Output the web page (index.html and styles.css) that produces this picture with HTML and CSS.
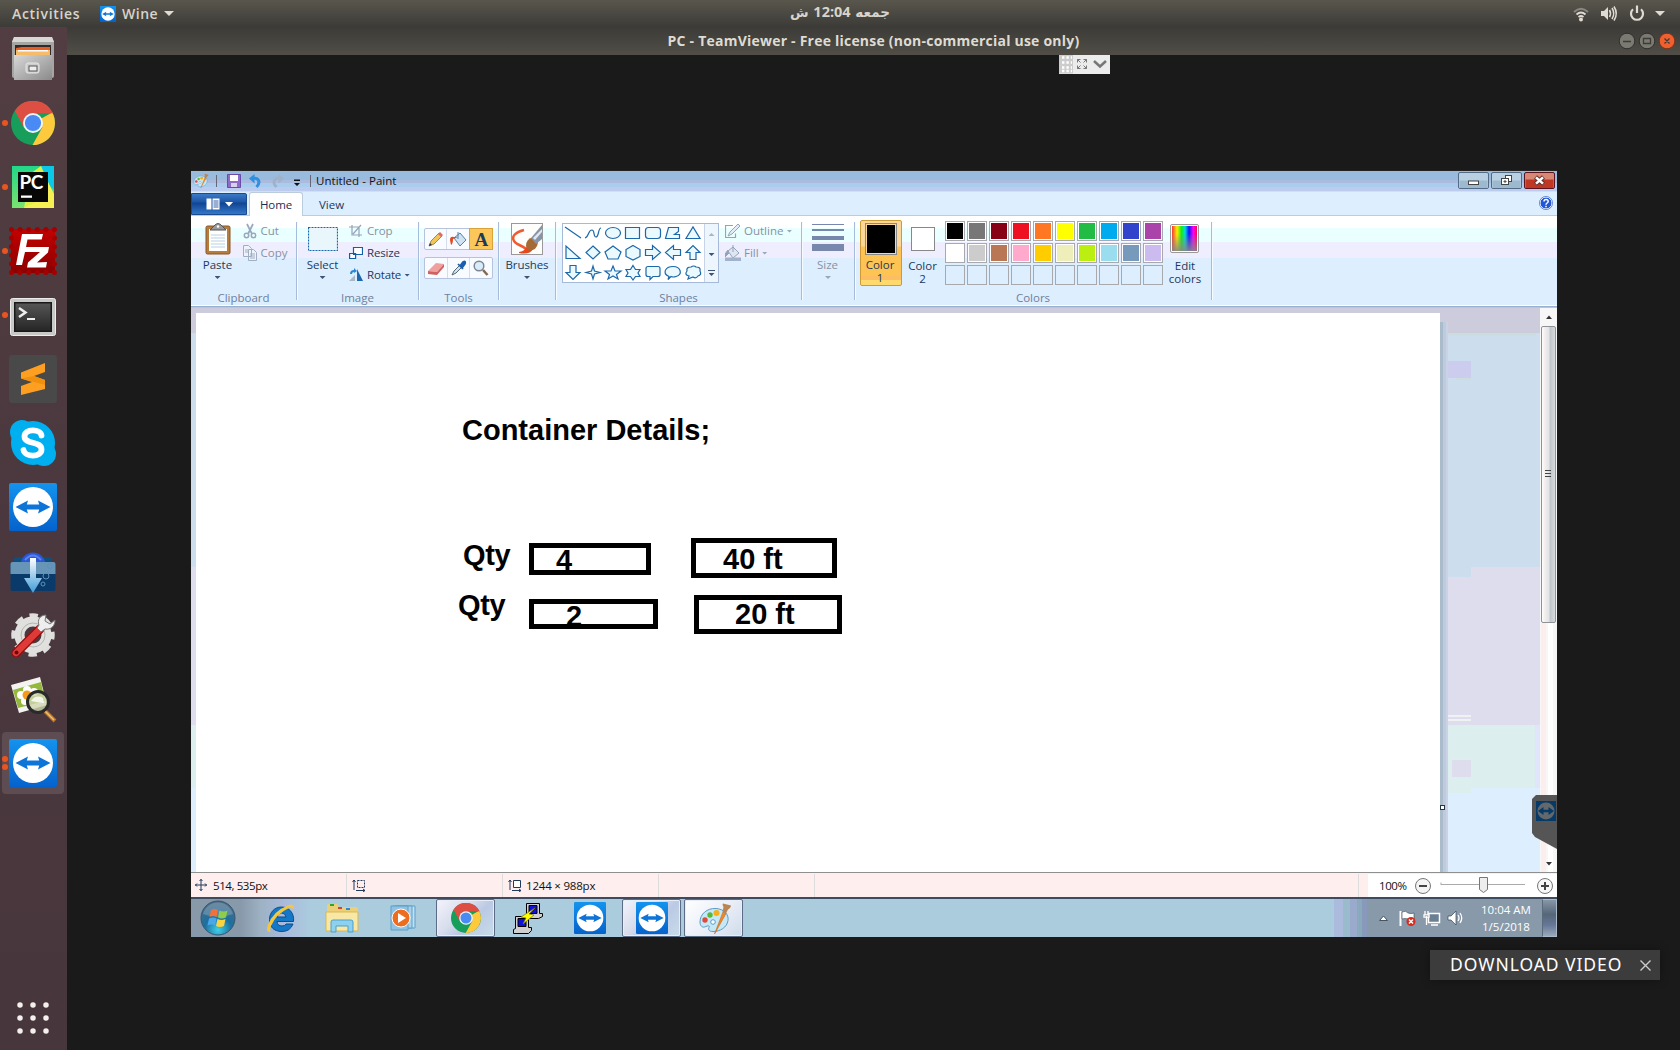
FILE: index.html
```html
<!DOCTYPE html>
<html lang="en">
<head>
<meta charset="utf-8">
<title>PC - TeamViewer</title>
<link rel="stylesheet" href="styles.css">
</head>
<body>
<svg class="defs" width="0" height="0">
  <defs>
    <linearGradient id="gTv" x1="0" y1="0" x2="0" y2="1"><stop offset="0" stop-color="#1493ee"/><stop offset="1" stop-color="#0562cc"/></linearGradient>
    <linearGradient id="gGrey" x1="0" y1="0" x2="1" y2="1"><stop offset="0" stop-color="#d8d8d8"/><stop offset="1" stop-color="#8a8a8a"/></linearGradient>
    <linearGradient id="gFz" x1="0" y1="0" x2="0" y2="1"><stop offset="0" stop-color="#c40000"/><stop offset="1" stop-color="#8c0000"/></linearGradient>
    <linearGradient id="gPcm" x1="0" y1="0" x2="0" y2="1"><stop offset="0" stop-color="#21d789"/><stop offset="1" stop-color="#7be36f"/></linearGradient>
    <linearGradient id="gTerm" x1="0" y1="0" x2="0" y2="1"><stop offset="0" stop-color="#555"/><stop offset="1" stop-color="#262626"/></linearGradient>
    <linearGradient id="gArrow" x1="0" y1="0" x2="0" y2="1"><stop offset="0" stop-color="#fff"/><stop offset="1" stop-color="#3f9bd8"/></linearGradient>
    <radialGradient id="gOrb" cx=".5" cy=".85" r=".8"><stop offset="0" stop-color="#3fd0e8"/><stop offset=".5" stop-color="#1c6f9f"/><stop offset="1" stop-color="#4a6c88"/></radialGradient>
    <linearGradient id="gRain" x1="0" x2="1" y1="0" y2="0"><stop offset="0" stop-color="#f33"/><stop offset=".2" stop-color="#fe0"/><stop offset=".38" stop-color="#1e1"/><stop offset=".52" stop-color="#0dd"/><stop offset=".68" stop-color="#11f"/><stop offset=".85" stop-color="#f0f"/><stop offset="1" stop-color="#f04"/></linearGradient>
    <linearGradient id="gFade" x1="0" x2="0" y1="0" y2="1"><stop offset=".3" stop-color="#888" stop-opacity="0"/><stop offset="1" stop-color="#888" stop-opacity=".9"/></linearGradient>
    <symbol id="tv" viewBox="0 0 48 48"><rect width="48" height="48" rx="2" fill="url(#gTv)"/><circle cx="24" cy="24" r="20" fill="#fff"/><path d="M6.500 24L19 17.500l-1.200 4h12.400l-1.200-4L41.500 24 29 30.500l1.200-4H17.800l1.200 4z" fill="#0e74d8"/></symbol>
    <symbol id="chrome" viewBox="0 0 44 44"><circle cx="22" cy="22" r="22" fill="#179e5a"/><path d="M22 22L41.300 11.500A22 22 0 0 1 21.500 44L31.500 26z" fill="#fdca3e"/><path d="M3.800 9.700A22 22 0 0 1 42 12.200H22L12.500 26z" fill="#dd4f43"/><circle cx="22" cy="22" r="10" fill="#f4f4f4"/><circle cx="22" cy="22" r="8.100" fill="#4a8af4"/></symbol>
    <symbol id="palette" viewBox="0 0 32 32"><path d="M2 20c0-8 7-14 16-13.500 8 .5 13 6 12 12-1 7-8 11-15 11-4 0-5-2-4-4s-1-2-3-1c-4 2-6-1-6-4.500z" fill="#c5e8f6" stroke="#5b9bc4"/><circle cx="7" cy="18" r="2.700" fill="#e04a3c"/><circle cx="12" cy="13" r="2.700" fill="#59b838"/><circle cx="18.500" cy="11" r="3" fill="#f6ae1c"/><circle cx="15" cy="20" r="2.300" fill="#fff" stroke="#5b9bc4"/><path d="M16.500 32L25 10l3 1.500z" fill="#ef8a2c" stroke="#c76516" stroke-width=".6"/><path d="M24.500 10l1-5c-1-1-1-3-.500-3.500l8 2c0 2-2 3.500-3 4l-2 4z" fill="#b98653"/></symbol>
  </defs>
</svg>

<header class="topbar">
  <span class="activities">Activities</span>
  <svg class="tv16" width="16" height="16"><use href="#tv"/></svg>
  <span class="appname">Wine</span>
  <i class="caret"></i>
  <span class="clock" dir="rtl">جمعه <b>12:04</b> ش</span>
  <svg class="indicators" width="94" height="18" viewBox="0 0 94 18" fill="none">
    <path d="M1 7Q8 .5 15 7" stroke="#8a8882" stroke-width="2"/><path d="M3.500 9.500Q8 5.500 12.500 9.500M5.500 12Q8 10 10.500 12" stroke="#dfdbd2" stroke-width="1.800"/><circle cx="8" cy="14.500" r="2" fill="#dfdbd2"/>
    <path d="M28 6h3l4-4v13l-4-4h-3z" fill="#dfdbd2"/><path d="M36.500 5q2 3.500 0 7M39 3q3.500 5.500 0 11M41 1.500q4.500 7 0 14" stroke="#dfdbd2" stroke-width="1.600"/>
    <path d="M60 4.300a6 6 0 1 0 8 0M64 .5v7.500" stroke="#dfdbd2" stroke-width="2.200"/>
    <path d="M82 6h10l-5 5z" fill="#dfdbd2"/>
  </svg>
</header>

<div class="desktop">
<nav class="dock">
  <div class="app"><svg width="48" height="48" viewBox="0 0 48 48"><path d="M5 2h38l2 5v34q0 2-2 2H5q-2 0-2-2V7z" fill="#a5a5a3"/><path d="M5 2h38l2 5H3z" fill="#d7d7d5"/><path d="M6 10h36v12H6z" fill="#302b28"/><path d="M7 13l6-1h28v9H7z" fill="#e85e22"/><path d="M7 15h34v7H7z" fill="#f6bb6b"/><path d="M9 15h30v1.500H9z" fill="#fff"/><path d="M5 20h38v25H5z" fill="url(#gGrey)"/><rect x="17" y="28" width="13" height="10" rx="2" fill="#ccc" stroke="#e6e6e6"/><rect x="20" y="31" width="8" height="5" fill="#eee" stroke="#555"/></svg></div>
  <div class="app"><i class="dot"></i><svg width="44" height="44"><use href="#chrome"/></svg></div>
  <div class="app"><i class="dot"></i><svg width="42" height="42" viewBox="0 0 42 42"><path d="M0 0h42v42H0z" fill="url(#gPcm)"/><path d="M30 0h12v24L28 10z" fill="#0bc7e8"/><path d="M18 8L29 0l13 30v12H12z" fill="#dff045"/><path d="M34 12l8 16v14H12l24-12z" fill="#f7f055"/><rect x="6" y="6" width="30" height="30" fill="#070707"/><path d="M9 29.500h11v2.300H9z" fill="#fff"/><text x="7.500" y="23" class="pc">PC</text></svg></div>
  <div class="app"><i class="dot"></i><svg width="48" height="48" viewBox="0 0 48 48"><rect x="2" y="2" width="44" height="44" fill="url(#gFz)"/><rect x="2.500" y="2.500" width="43" height="43" fill="none" stroke="#a50000" stroke-width="5" stroke-linecap="round" stroke-dasharray="0.1 8.500"/><path d="M13 7h21l-1.300 5.500H18.500L17 20h14l-1 5H16l-3 13H7z" fill="#fff"/><path d="M23 20h17l-1 5.500-11 10 10-.5-1 5.500H18l1-5L31 25h-9z" fill="#fff"/></svg></div>
  <div class="app term"><i class="dot"></i><svg width="46" height="40" viewBox="0 0 46 40"><rect x=".5" y="1.500" width="45" height="37" rx="2" fill="#c8c8c6" stroke="#ececec"/><rect x="4" y="5" width="38" height="30" fill="#191919"/><rect x="5.500" y="6.500" width="35" height="27" fill="url(#gTerm)"/><path d="M9 11l6.500 4.500L9 20" fill="none" stroke="#eee" stroke-width="2.500"/><path d="M17 21h8v2h-8z" fill="#eee"/></svg></div>
  <div class="app"><svg width="48" height="48" viewBox="0 0 48 48"><rect width="48" height="48" rx="3" fill="#494949"/><path d="M12 17.500L36 8v9l-11 4 11 4v9L12 40v-9l11-4-11-3.500z" fill="#ff9f22"/><path d="M12 23.500l13-2.500 11 4v5z" fill="#f0900f"/></svg></div>
  <div class="app"><svg width="48" height="48" viewBox="0 0 48 48"><circle cx="13" cy="13" r="12" fill="#00aff0"/><circle cx="35" cy="35" r="12" fill="#00aff0"/><circle cx="24" cy="24" r="22" fill="#00aff0"/><path d="M32.500 16.500C31.500 9.500 15.500 9.500 15.500 17.500 15.500 26 32.500 21.500 32.500 30.500 32.500 38.500 16 38.500 14.500 31" fill="none" stroke="#fff" stroke-width="5.800" stroke-linecap="round"/></svg></div>
  <div class="app"><svg width="48" height="48"><use href="#tv"/></svg></div>
  <div class="app"><svg width="48" height="48" viewBox="0 0 48 48"><rect x="5" y="10" width="38" height="12" rx="2" fill="#104f7b"/><circle cx="24" cy="18" r="12.500" fill="#2c57d6"/><path d="M16 13q8-9 16 0" stroke="#5b83ef" stroke-width="2" fill="none"/><rect x="1.500" y="15" width="45" height="29" rx="2" fill="#0a3a6a"/><path d="M1.500 27V17q0-2 2-2h41q2 0 2 2v10z" fill="#6795b8"/><g fill="none" stroke="#5c91bd"><circle cx="37" cy="29" r="3"/><circle cx="41" cy="19" r="2.500"/><circle cx="34" cy="37" r="2"/></g><path d="M21 11h6v20h6L24 46l-9-15h6z" fill="url(#gArrow)"/></svg></div>
  <div class="app"><svg width="48" height="48" viewBox="0 0 48 48"><circle cx="24" cy="24" r="19" fill="none" stroke="#dededc" stroke-width="5.500" stroke-dasharray="8.200 6.720" stroke-dashoffset="4"/><circle cx="24" cy="24" r="13.500" fill="none" stroke="#e0e0de" stroke-width="10"/><circle cx="24" cy="24" r="12" fill="none" stroke="#b4b4b2"/><path d="M7 42L31 18" stroke="#8e0f12" stroke-width="9" stroke-linecap="round"/><path d="M7 42L31 18" stroke="#de3b38" stroke-width="6.500" stroke-linecap="round"/><path d="M28 17l4 4 4-3c6 1 10-3 10-9l-5 4-5-3 1-6c-6 0-9 5-7 10z" fill="#eee" stroke="#777"/><circle cx="7.500" cy="41.500" r="2" fill="#68090b"/></svg></div>
  <div class="app"><svg width="48" height="48" viewBox="0 0 48 48"><path d="M2 10L31 2l7 28L10 38z" fill="#f3f3ef"/><path d="M4 15l28-8 4 19-27 7z" fill="#94b83b"/><g fill="#fff"><circle cx="18" cy="15" r="4"/><circle cx="12" cy="20" r="4"/><circle cx="25" cy="17" r="4"/><circle cx="16" cy="26" r="4"/></g><circle cx="18" cy="20" r="4.500" fill="#f39a1d"/><path d="M36 36l10 10" stroke="#b9772d" stroke-width="4"/><path d="M36 36l9 9" stroke="#eec07b" stroke-width="1.500"/><circle cx="29" cy="27" r="10.500" fill="#cfd6b0" fill-opacity=".8" stroke="#292b2a" stroke-width="3"/><path d="M22 26q5-7 12-3l1 5-8-1z" fill="#fff" fill-opacity=".8"/></svg></div>
  <div class="app active"><i class="dot two"></i><svg width="48" height="48"><use href="#tv"/></svg></div>
  <svg class="appgrid" width="32" height="32" viewBox="0 0 32 32"><path d="M3 3h.01M16 3h.01M29 3h.01M3 16h.01M16 16h.01M29 16h.01M3 29h.01M16 29h.01M29 29h.01" stroke="#f3f0ee" stroke-width="5.500" stroke-linecap="round"/></svg>
</nav>

<main class="viewer">
  <div class="titlebar"><span>PC - TeamViewer - Free license (non-commercial use only)</span>
    <svg class="wbtns" width="60" height="20" viewBox="0 0 60 20"><g stroke="#31302c"><circle cx="10" cy="10" r="7.800" fill="#7b7a72"/><circle cx="30" cy="10" r="7.800" fill="#7b7a72"/><circle cx="50" cy="10" r="7.800" fill="#f0602f" stroke="#7a3319"/></g><path d="M6 10.500h8M26.500 7.500h7v5h-7zM47.500 7.500l5 5m0-5l-5 5" stroke="#3c3b37" stroke-width="1.300" fill="none"/></svg>
  </div>
  <svg class="tvtool" width="51" height="19" viewBox="0 0 51 19"><path d="M0 0h51v19H0z" fill="#ececec"/><path d="M0 0h14v18.500H0z" fill="#ccc"/><path d="M3 2.500h10M3 7.500h10M3 12.500h10M3 16h10" stroke="#fff" stroke-width="2.400" stroke-dasharray="2.400 2"/><path d="M18.500 7.500v-3h3M24.500 4.500h3v3M27.500 10.500v3h-3M21.500 13.500h-3v-3M18.500 4.500l3 3M27.500 4.500l-3 3M27.500 13.500l-3-3M18.500 13.500l3-3" stroke="#777" fill="none"/><path d="M35 6l6 5.500L47 6" stroke="#777" stroke-width="2.500" fill="none"/></svg>

  <section class="remote">
    <div class="ptitle">
      <svg class="qat" width="94" height="20" viewBox="0 0 94 20"><svg x="1" y="2" width="17" height="15"><use href="#palette"/></svg>
        <path d="M25.500 4v12" stroke="#667"/>
        <path d="M36.500 3.500h13v13h-13z" fill="#8d6bc8" stroke="#6a4ba8"/><path d="M39 4h8v6h-8z" fill="#fff"/><path d="M40 12h6v4h-6z" fill="#d9d0ee"/>
        <path d="M61 7.500c7-1.500 9 4 4.500 8.500" fill="none" stroke="#2f8fe0" stroke-width="3"/><path d="M63.500 3v9.500L58 7.500z" fill="#2f8fe0"/>
        <path d="M90 7.500c-7-1.500-9 4-4.500 8.500" fill="none" stroke="#a0b2c8" stroke-width="3"/><path d="M87.500 3v9.500L93 7.500z" fill="#a0b2c8"/></svg>
      <svg class="qmore" width="8" height="8" viewBox="0 0 8 8"><path d="M1 .5h6v1.500H1zM1 4h6L4 7z" fill="#111"/></svg>
      <span class="vbar"></span>
      <span class="ptext">Untitled - Paint</span>
      <svg class="caption" width="98" height="17" viewBox="0 0 98 17">
        <g stroke="#536b85"><rect x=".5" y=".5" width="30" height="16" rx="1.500" fill="#b9d0e2"/><rect x="33.500" y=".5" width="30" height="16" rx="1.500" fill="#b9d0e2"/><rect x="66.500" y=".5" width="30" height="16" rx="1.500" fill="#d88875" stroke="#5a1520"/></g>
        <path d="M1.500 8.500h28V16h-28zM34.500 8.500h28V16h-28z" fill="#9db9cf"/><path d="M67.500 7.500h28V16h-28z" fill="#c03823"/>
        <rect x="10.500" y="9" width="10" height="3.500" fill="#fff" stroke="#444"/>
        <g fill="#fff" stroke="#444"><rect x="47.500" y="3.500" width="6" height="6"/><rect x="43.500" y="6.500" width="7" height="6"/><path d="M46 9h2v1h-2z"/></g>
        <path d="M77.500 5l8 7m0-7l-8 7" stroke="#633" stroke-width="4.500"/><path d="M78 5.300l7 6.400m0-6.400l-7 6.400" stroke="#fff" stroke-width="2.500"/>
      </svg>
    </div>
    <div class="ptabs">
      <div class="filebtn"><svg width="28" height="12" viewBox="0 0 28 12"><rect x=".5" y=".5" width="13" height="11" fill="#fff"/><path d="M6 0v12" stroke="#1d4f9c"/><path d="M7.500 3h5M7.500 5h5M7.500 7h5M7.500 9h5" stroke="#1d4f9c" stroke-width=".9"/><path d="M19 4h8l-4 4.500z" fill="#fff"/></svg></div>
      <div class="tab home">Home</div><div class="tab viewtab">View</div>
      <svg class="help" width="14" height="14" viewBox="0 0 14 14"><circle cx="7" cy="7" r="6" fill="#2156d8" stroke="#fff"/><circle cx="7" cy="7" r="6.600" fill="none" stroke="#3a66c8" stroke-width=".7"/><path d="M5 5.500c0-3 4.200-2.500 4.200 0C9.200 7 7 7 7 8.700M7 9.800v1.500" stroke="#fff" stroke-width="1.500" fill="none"/></svg>
    </div>

    <div class="ribbon">
      <div class="group g1"><div class="body">
        <div class="big paste"><svg width="26" height="32" viewBox="0 0 26 32"><rect x="1" y="3" width="24" height="28" rx="1.500" fill="#b67c3c" stroke="#85562a"/><path d="M4 6h18v22H4z" fill="#fff"/><path d="M6 12h14M6 15h14M6 18h14M6 21h14M6 24h14" stroke="#b8cfe4"/><path d="M5 7l4-4q4-5 8 0l4 4z" fill="#9a9a9a" stroke="#555"/><circle cx="13" cy="3.500" r="1.200" fill="#fff"/></svg><span>Paste</span><i class="dn"></i></div>
        <div class="rows dis"><div class="r"><svg width="14" height="16" viewBox="0 0 14 16" fill="none" stroke="#9aa8bd"><path d="M4 1l5 10M10 1L5 11" stroke-width="1.700"/><circle cx="3.500" cy="12.500" r="2.200" stroke-width="1.500"/><circle cx="10.500" cy="12.500" r="2.200" stroke-width="1.500"/></svg><span>Cut</span></div>
        <div class="r"><svg width="14" height="16" viewBox="0 0 14 16" fill="#eef2fa" stroke="#a0aec4"><path d="M.5.500h5l3 3v8h-8zM5.500 4.500h5l3 3v8h-8z"/><path d="M7 9h5M7 11h5M7 13h5M2 5h3M2 7h3"/></svg><span>Copy</span></div></div>
      </div><div class="gl">Clipboard</div></div>

      <div class="group g2"><div class="body">
        <div class="big select"><svg width="30" height="32" viewBox="0 0 30 32"><rect x=".5" y="4.500" width="29" height="23" fill="#e9f7fd" stroke="#1767ae" stroke-width="1.200" stroke-dasharray="2 1"/></svg><span>Select</span><i class="dn"></i></div>
        <div class="rows"><div class="r dis"><svg width="14" height="14" viewBox="0 0 14 14" fill="none" stroke="#94a3ba"><path d="M3 1v10h10M0 3h10v10M4 10l8-9" stroke-width="1.200"/></svg><span>Crop</span></div>
        <div class="r"><svg width="14" height="14" viewBox="0 0 14 14" fill="#fff" stroke="#1460a8" stroke-width="1.200"><path d="M4.500 1.500h9v7h-9zM.6 7.500h6v5h-6z"/></svg><span>Resize</span></div>
        <div class="r"><svg width="14" height="14" viewBox="0 0 14 14"><path d="M8 1v12h6z" fill="#1c67b0"/><path d="M6 7v6H0z" fill="#a9b8c8"/><path d="M1 6q0-4 4-4V0l3 3-3 2V4q-2 0-2 2z" fill="#2b86d9"/></svg><span>Rotate</span><i class="dn"></i></div></div>
      </div><div class="gl">Image</div></div>

      <div class="group g3"><div class="body toolsbody">
        <div class="trow"><div><svg width="16" height="16" viewBox="0 0 16 16"><path d="M1 15l2-5 8-8 3 3-8 8z" fill="#f1c559" stroke="#856023" stroke-width=".7"/><path d="M10 3l2-2 3 3-2 2z" fill="#d86a6a"/><path d="M1 15l1-3 2 2z" fill="#333"/></svg></div><div><svg width="18" height="16" viewBox="0 0 18 16"><path d="M5 7l6-5 6 7-6 6z" fill="#cfe3f3" stroke="#5580a8"/><path d="M5 6Q1 5 1 9l1 5q2-1 2-6l5-2z" fill="#e34a20"/><path d="M9 8V1" stroke="#5580a8"/></svg></div><div class="on">A</div></div>
        <div class="trow"><div><svg width="18" height="14" viewBox="0 0 18 14"><path d="M1 10l8-8 8 1-7 8z" fill="#f0a09f"/><path d="M1 10l9 1v3l-9-1zM10 11l7-8v3l-7 8z" fill="#cf615e"/></svg></div><div><svg width="16" height="16" viewBox="0 0 16 16"><path d="M1 15l2-4 6-6 2 2-6 6z" fill="#cfe3f3" stroke="#567"/><path d="M7 4l5 5M9 6l3-4q3-2 2 2l-3 4z" fill="#1c5fae" stroke="#1c5fae" stroke-width="1.700"/></svg></div><div><svg width="16" height="16" viewBox="0 0 16 16"><circle cx="6" cy="6" r="4.800" fill="#d9ecf8" stroke="#7b8794" stroke-width="1.500"/><path d="M10 10l4.500 5" stroke="#85684c" stroke-width="2.500"/></svg></div></div>
      </div><div class="gl">Tools</div></div>

      <div class="group g4"><div class="body"><div class="big brushes"><svg width="32" height="32" viewBox="0 0 32 32"><rect x=".5" y=".5" width="31" height="31" fill="#fdfdfb" stroke="#999"/><path d="M13 7Q-1 11 3 18c2 4 8 4 12 8" fill="none" stroke="#ef5a30" stroke-width="2.500"/><path d="M8 29q7-1 8-7l6 4q-3 6-14 4z" fill="#e34a20"/><path d="M15 23q0-7 6.500-8.500l5.500 5q-1 8-9 8z" fill="#a66a34"/><path d="M20 15L31 2v14l-6 5z" fill="#8694a8"/><path d="M22 15l9-9v3l-7 8z" fill="#dfe6ee"/></svg><span>Brushes</span><i class="dn"></i></div></div></div>

      <div class="group g5"><div class="body">
        <div class="gallery"><svg width="142" height="58" viewBox="0 0 142 58" fill="#e9f9fe" stroke="#1c68aa" stroke-width="1.200">
          <path d="M2 3l16 11"/><path d="M22 14c4-1 3-8 7-8 3 0 1 7 4 7s2-9 5-9" fill="none"/><ellipse cx="50" cy="9" rx="7.500" ry="5.500"/><path d="M62.500 3.500h14v11h-14z"/><rect x="82.500" y="3.500" width="15" height="11" rx="3"/><path d="M102.500 14.500l3-11h10v4l-4 3h5v4z"/><path d="M123 14.500h14L130 3z"/>
          <path d="M3 34.500V22l14 12.500z"/><path d="M30 22l7 6.500-7 6.500-7-6.500z"/><path d="M50 22l8 6-3 7H45l-3-7z"/><path d="M70 21.500l7 4v7l-7 3.500-7-3.500v-7z"/><path d="M82.500 25.500h7v-4l8 7-8 7v-4h-7z"/><path d="M117.500 25.500h-7v-4l-8 7 8 7v-4h7z"/><path d="M127 35.500v-7h-4l7-7 7 7h-4v7z"/>
          <path d="M7 41.500v7H3l7 7 7-7h-4v-7z"/><path d="M30 42l1.500 5 5.500 1.500-5.500 1.500L30 55l-1.500-5-5.500-1.500 5.500-1.500z"/><path d="M50 42l2 5h6l-4.500 3.500L55 55l-5-3-5 3 1.500-4.500L42 47h6z"/><path d="M70 41.500l2.500 4H77l-2 3.500 2 3.500h-4.500L70 56l-2.500-3.500H63l2-3.500-2-3.500h4.500z"/><path d="M85 42.500h10q2 0 2 2v6q0 2-2 2h-5l-3 3v-3h-2q-2 0-2-2v-6q0-2 2-2z"/><path d="M106 52.500c-7-3-4-10 4-10s10 8 3 10q-3 1-5 0l-3 3z"/><path d="M126 52q-5-1-2-5-1-4 4-4 3-2 5 0 5 0 4 4 2 4-2 5-2 3-5 1l-5 2z"/></svg>
          <div class="gscroll"><i class="up"></i><i class="dn"></i><i class="bar"></i><i class="dn"></i></div></div>
        <div class="rows dis"><div class="r"><svg width="16" height="14" viewBox="0 0 16 14" fill="none" stroke="#94a3ba"><path d="M8 1.500H.5v12h10v-4" stroke-width="1.200"/><path d="M3 12l2-4 8-8 2 2-8 8z" fill="#e6ecf7"/></svg><span>Outline</span><i class="dn"></i></div>
        <div class="r"><svg width="16" height="16" viewBox="0 0 16 16"><path d="M3 6l5-4 6 6-6 5z" fill="#dfe6f2" stroke="#94a3ba"/><path d="M3 5L0 9v3l4-4M8 7V0" stroke="#94a3ba" fill="#94a3ba"/><path d="M0 12.500h16V16H0z" fill="#a3b2cb"/></svg><span>Fill</span><i class="dn"></i></div></div>
      </div><div class="gl">Shapes</div></div>

      <div class="group g6"><div class="body"><div class="big size dis"><svg width="32" height="32" viewBox="0 0 32 32"><path d="M0 1h32v1H0zM0 6h32v2H0zM0 13h32v4H0zM0 21h32v7H0z" fill="#7888ac"/></svg><span>Size</span><i class="dn"></i></div></div></div>

      <div class="group g7"><div class="body">
        <div class="cbtn sel"><i class="sw1"></i><span>Color<br>1</span></div>
        <div class="cbtn second"><i class="sw2"></i><span>Color<br>2</span></div>
        <div class="pal">
          <i class="k0"></i><i class="k1"></i><i class="k2"></i><i class="k3"></i><i class="k4"></i><i class="k5"></i><i class="k6"></i><i class="k7"></i><i class="k8"></i><i class="k9"></i>
          <i class="m0"></i><i class="m1"></i><i class="m2"></i><i class="m3"></i><i class="m4"></i><i class="m5"></i><i class="m6"></i><i class="m7"></i><i class="m8"></i><i class="m9"></i>
          <i class="e"></i><i class="e"></i><i class="e"></i><i class="e"></i><i class="e"></i><i class="e"></i><i class="e"></i><i class="e"></i><i class="e"></i><i class="e"></i>
        </div>
        <div class="cbtn edit"><svg width="30" height="30" viewBox="0 0 30 30"><rect x=".5" y=".5" width="28" height="28" rx="1.500" fill="#fff" stroke="#999"/><path d="M2 2h25v25H2z" fill="url(#gRain)"/><path d="M2 2h25v25H2z" fill="url(#gFade)"/></svg><span>Edit<br>colors</span></div>
      </div><div class="gl">Colors</div></div>
    </div>

    <div class="work">
      <div class="leftstrip"></div>
      <div class="canvas">
        <span class="t" style="left:266px;top:99px">Container Details;</span>
        <span class="t q" style="left:267px;top:224px">Qty</span><span class="t q" style="left:262px;top:274px">Qty</span>
        <div class="box" style="left:333px;top:230px;width:122px;height:32px"></div>
        <div class="box" style="left:495px;top:225px;width:146px;height:40px"></div>
        <div class="box" style="left:333px;top:286px;width:129px;height:30px"></div>
        <div class="box" style="left:498px;top:282px;width:148px;height:39px"></div>
        <span class="t" style="left:360px;top:229px">4</span><span class="t" style="left:527px;top:228px">40 ft</span>
        <span class="t" style="left:370px;top:285px">2</span><span class="t" style="left:539px;top:283px">20 ft</span>
      </div>
      <svg class="gutter" width="100" height="564" viewBox="0 0 100 564"><path d="M0 0h100v564H0z" fill="#ccdded"/><path d="M0 0h100v25H0z" fill="#ccccdd"/><path d="M8 25h88v3H8z" fill="#ccdddd"/><path d="M8 53h23v17H8z" fill="#ccccee"/><path d="M16 70h15v2H16z" fill="#ccdddd"/><path d="M8 269h23v-10h69v158H8z" fill="#dddded"/><path d="M8 407h23v2H8zM8 411h23v2H8z" fill="#eef2f2"/><path d="M8 417h92v147H8z" fill="#ddeeff"/><path d="M8 417h88v63H31v5H8z" fill="#ddeeee"/><path d="M12 452h19v17H12z" fill="#ddddee"/><path d="M95 417h5v63h-5z" fill="#e1e5fb"/><path d="M0 14h3v550H0z" fill="#aabbcc"/><path d="M3 14h3v550H3z" fill="#bccbdd"/><path d="M6 14h2v550H6z" fill="#cbd2e6"/><rect x=".5" y="497.500" width="4" height="4" fill="#fff" stroke="#234"/></svg>
      <svg class="scroll" width="17" height="564" viewBox="0 0 17 564"><defs><linearGradient id="gThumb" x1="0" x2="1"><stop offset="0" stop-color="#fff"/><stop offset=".25" stop-color="#f3eeee"/><stop offset=".55" stop-color="#dfe3e4"/><stop offset=".6" stop-color="#bcc5cb"/><stop offset="1" stop-color="#dcdcdc"/></linearGradient></defs><path d="M0 0h17v564H0z" fill="#f7f7f8"/><path d="M1 315h5v249H1z" fill="#fdeeee"/><path d="M8 315h5v249H8z" fill="#fff"/><path d="M6 11l3-3.500 3 3.500z" fill="#333"/><rect x="1.500" y="18.500" width="14" height="296" rx="1.500" fill="url(#gThumb)" stroke="#8e9297"/><path d="M5 162.500h6M5 165.500h6M5 168.500h6" stroke="#444" stroke-width="1.200"/><path d="M6 554l3 3.500 3-3.500z" fill="#333"/></svg>
      <svg class="sidetab" width="25" height="54" viewBox="0 0 25 54"><path d="M25 0H4L0 4v34l3 4 22 12z" fill="#555"/><path d="M4 6h20v20H4z" fill="#063a68"/><circle cx="14" cy="16" r="8.500" fill="#64686b"/><path d="M6 16l5.500-4v2.700h5V12l5.500 4-5.500 4v-2.700h-5V20z" fill="#063a68"/></svg>
    </div>

    <div class="status">
      <div class="s1"><svg width="12" height="12" viewBox="0 0 12 12"><path d="M6 0v12M0 6h12M4.500 2L6 .5 7.500 2M4.500 10L6 11.500 7.500 10M2 4.500L.5 6 2 7.500M10 4.500L11.500 6 10 7.500" stroke="#1f3a5c" fill="none"/></svg><span>514, 535px</span></div>
      <div class="s2"><svg width="14" height="13" viewBox="0 0 14 13" fill="none" stroke="#1f3a5c"><path d="M2 11V1M.5 3L2 1l1.500 2M4 11.500h9M11 10l2 1.500-2 1.500"/><path d="M5.500 1.500h7v7h-7z" stroke-dasharray="2 1"/></svg></div>
      <div class="s3"><svg width="14" height="13" viewBox="0 0 14 13" fill="none" stroke="#1f3a5c"><path d="M2 11V1M.5 3L2 1l1.500 2M4 11.500h9M11 10l2 1.500-2 1.500"/><path d="M5.500 1.500h7v7h-7z" fill="#fff"/></svg><span class="dims">1244 × 988px</span></div>
      <div class="s4"></div><div class="s5"></div>
      <div class="zoombar"><span>100%</span><svg width="142" height="24" viewBox="0 0 142 24" fill="none"><circle cx="11" cy="13" r="7.500" stroke="#777" fill="#f4f4f4"/><path d="M7 13h8" stroke="#444" stroke-width="2"/><path d="M29 9.500V12M29 11.500h84" stroke="#aaa"/><path d="M67.500 4.500h8v12l-4 3-4-3z" fill="#eee" stroke="#777"/><circle cx="133" cy="13" r="7.500" stroke="#777" fill="#f8f8f8"/><path d="M133 9v8M129 13h8" stroke="#444" stroke-width="2"/></svg></div>
    </div>

    <div class="taskbar">
      <div class="ti orb"><svg width="36" height="36" viewBox="0 0 36 36"><circle cx="18" cy="18" r="17" fill="url(#gOrb)" stroke="#36566f"/><path d="M3 14a15.500 15.500 0 0 1 30 0q-15 6-30 0z" fill="#fff" opacity=".2"/><path d="M11 10q4-2 7 0l-1.500 7q-3-2-7 0z" fill="#f2713a"/><path d="M19.500 10.500q4 2 8 0L26 17.500q-4 2-8 0z" fill="#8fce4a"/><path d="M9 18.500q4-2 7.500 0L15 25.500q-3.500-2-7.500 0z" fill="#4ba7e8"/><path d="M17.500 19q4 2 8 0L24 26q-4 2-8 0z" fill="#fbd33e"/></svg></div>
      <div class="ti ie"><svg width="34" height="34" viewBox="0 0 34 34"><path d="M30 23q-3 7.500-11 7.500C10 30.500 6.500 25 6.500 18.500S11 6 18.500 6s13 6 12 14.500H14q.5 4.500 5 4.500 3 0 4-2zM14 16h9q-.5-4-4.500-4T14 16z" fill="#1378c8" stroke="#0c4d8c"/><path d="M8 31Q2 32 5 24 10 10 26 4q7-2 4 6 0-5-4-3Q13 13 8 25q-2 5 0 6z" fill="#f5c73c"/></svg></div>
      <div class="ti"><svg width="34" height="30" viewBox="0 0 34 30"><path d="M2 3q0-2 2-2h8l2 3h17q2 0 2 2v21H2z" fill="#ecd077"/><path d="M5 1h4v2H5z" fill="#2ca72c"/><path d="M13 4h4v2h-4z" fill="#d3462b"/><path d="M21 5h4v2h-4z" fill="#2f87d8"/><path d="M1 9h32v19H1z" fill="#f8e8a5" stroke="#d8b75a"/><path d="M6 29V19q0-2 2-2h18q2 0 2 2v10h-5v-6H11v6z" fill="#8ed0f0" stroke="#4d9fc9"/></svg></div>
      <div class="ti"><svg width="32" height="28" viewBox="0 0 32 28"><path d="M8 2h19v22H8z" fill="#c3e0f2" stroke="#5c9fc9"/><path d="M5 2h19v22H5z" fill="#a9d1ea" stroke="#5c9fc9"/><path d="M3 2h17v24H3z" fill="#8fc3e3" stroke="#5c9fc9"/><circle cx="13" cy="14" r="9" fill="#ee6c1d" stroke="#fff"/><path d="M10 9l8 5-8 5z" fill="#fff"/></svg></div>
      <div class="ti run"><svg width="30" height="30"><use href="#chrome"/></svg></div>
      <div class="ti"><svg width="32" height="32" viewBox="0 0 32 32"><g stroke="#000" fill="#d0d0d0"><path d="M14.500 1.500h13v10h3v3l-4 2h-11l-1-3z"/><path d="M3.500 14.500h13v11h3v3l-3 3h-15v-4l2-1z"/></g><path d="M17 3.500h8v8h-8zM6 16.500h8v8H6z" fill="#1010d8" stroke="#000"/><path d="M23 6L9 15l5 1-3 6 11-9-5-1z" fill="#ff0" stroke="#770" stroke-width=".7"/></svg></div>
      <div class="ti"><svg width="32" height="32"><use href="#tv"/></svg></div>
      <div class="ti run"><svg width="32" height="32"><use href="#tv"/></svg></div>
      <div class="ti run front"><svg width="34" height="32"><use href="#palette"/></svg></div>
      <div class="tray">
        <svg width="84" height="20" viewBox="0 0 84 20"><path d="M.5 12.500L4.500 8l4 4.500z" fill="#fff" stroke="#456"/><path d="M21.500 18V3" stroke="#fff" stroke-width="2"/><path d="M23 4q4-2 6 1 3 1 6 0v7q-4 1-6-1-3-1-6 0z" fill="#fff" stroke="#345" stroke-width=".6"/><circle cx="32" cy="13.500" r="4.500" fill="#d92b1c"/><path d="M30 11.500l4 4m0-4l-4 4" stroke="#fff" stroke-width="1.500"/><path d="M49.500 5.500h11v9h-11z" fill="#6b7f92" stroke="#fff" stroke-width="1.500"/><path d="M52 17h7M46 3v4M49 3v4M45 7h5v2h-5zM47.500 8v9" stroke="#fff" stroke-width="1.300"/><path d="M69 8h3l5-5v14l-5-5h-3z" fill="#fff" stroke="#345" stroke-width=".7"/><path d="M79 7q2 3 0 6M81 5q3.500 5 0 10" stroke="#fff" stroke-width="1.300" fill="none"/></svg>
        <div class="tclock">10:04 AM<br>1/5/2018</div>
        <div class="peek"></div>
      </div>
    </div>
  </section>

  <div class="download"><span>DOWNLOAD VIDEO</span><svg width="11" height="11" viewBox="0 0 11 11"><path d="M.5.500l10 10m0-10l-10 10" stroke="#ccc" stroke-width="1.400"/></svg></div>
</main>
</div>
</body>
</html>
```
FILE: styles.css
```css
* { box-sizing: border-box; }
body { margin: 0; width: 1680px; height: 1050px; overflow: hidden; background: #1a1a1a; font-family: "Open Sans", "Noto Sans", sans-serif; }
.defs { position: absolute; }
svg { display: block; flex: none; }
i { display: block; flex: none; }
span { white-space: nowrap; }

.topbar { height: 27px; display: flex; align-items: center; background: linear-gradient(#59564d, #3c3b37); color: #d8d4cb; font: 600 14px/26px "Open Sans", sans-serif; padding-left: 12px; position: relative; }
.activities { width: 88px; letter-spacing: .7px; }
.appname { margin-left: 6px; width: 42px; letter-spacing: .5px; }
.caret { border: 5px solid transparent; border-top-color: #dfdbd2; border-bottom: 0; }
.clock { position: absolute; left: 740px; top: -1px; width: 200px; text-align: center; font: bold 13.5px/26px "DejaVu Sans", sans-serif; }
.clock b { font: 700 14.5px "Open Sans", sans-serif; }
.indicators { margin-left: auto; margin-right: 13px; }

.desktop { display: flex; height: 1023px; }
.dock { width: 67px; background: linear-gradient(#523e42, #4a383e 50%, #47363b); display: flex; flex-direction: column; }
.app { height: 64px; width: 66px; display: flex; align-items: center; justify-content: center; position: relative; }
.app.active::before { content: ""; position: absolute; left: 2px; top: 1px; width: 62px; height: 62px; border-radius: 4px; background: #5d4c51; }
.app svg { position: relative; }
.term svg { margin-top: 4px; }
.dot { position: absolute; left: 2px; top: 29px; width: 6px; height: 6px; border-radius: 50%; background: #e95420; }
.dot.two { top: 25px; box-shadow: 0 8px 0 #e95420; }
.appgrid { margin: auto 0 16px 17px; }
.pc { font: 700 19px Lato, sans-serif; fill: #fff; letter-spacing: -.5px; }

.viewer { width: 1613px; position: relative; display: flex; flex-direction: column; }
.titlebar { height: 28px; background: linear-gradient(#3c3b37, #504e47); color: #dfdbd2; font: 700 14px/27px "Open Sans", sans-serif; text-align: center; position: relative; }
.titlebar span { letter-spacing: .22px; }
.wbtns { position: absolute; right: 3px; top: 4px; }
.tvtool { margin-left: 992px; }

.remote { margin: 96px 0 0 124px; width: 1366px; height: 767px; font-size: 11.5px; color: #1e395b; position: relative; }
.ptitle { height: 22px; display: flex; align-items: center; border-top: 1px solid #222; background: linear-gradient(#99bbdd 0 9px, #aabbdd 9px 12px, #aaccee 12px 16px, #bbccee 16px 20px, #cfe0f4 20px); }
.qat { margin-top: -1px; }
.qmore { margin: 2px 0 0 8px; }
.vbar { width: 1px; height: 12px; background: #667; margin: -1px 0 0 9px; }
.ptext { color: #111; margin: -2px 0 0 5px; font-size: 11.5px; letter-spacing: .03px; }
.caption { margin-left: auto; margin-right: 1px; margin-top: -2px; }
.ptabs { height: 24px; display: flex; background: #ddeeff; border-bottom: 1px solid #bbccdd; font-size: 12px; line-height: 24px; }
.filebtn { width: 56px; height: 22px; margin-top: 1px; background: linear-gradient(#3c7ac5, #1c56a8 40%, #114491 45%, #3277c8); border: 1px solid #1a4a90; border-radius: 0 2px 0 0; display: flex; align-items: center; padding-left: 14px; }
.tab.home { width: 54px; height: 24px; margin-left: 2px; background: #fff; border: 1px solid #bcd; border-bottom: 0; border-radius: 3px 3px 0 0; text-align: center; font-size: 11.5px; line-height: 23px; color: #1b2e55; letter-spacing: -.1px; }
.viewtab { margin-left: 16px; font-size: 11.5px; padding-top: 1px; }
.help { margin: 4px 4px 0 auto; }

.ribbon { height: 92px; display: flex; padding-top: 4px; background: linear-gradient(#fff 0 12px, #eaffff 12px 26px, #eeeeff 26px 42px, #ddeeff 42px 89px, #fff 89px 90px, #9ab0d0 90px 91px, #bbc4d8 91px); }
.group { height: 82px; position: relative; }
.group::after { content: ""; position: absolute; right: 0; top: 2px; width: 2px; height: 78px; background: linear-gradient(90deg, #a6bcdb 50%, #f6fbff 50%); }
.g1 { width: 107px; } .g2 { width: 122px; } .g3 { width: 80px; } .g4 { width: 57px; } .g5 { width: 246px; } .g6 { width: 53px; } .g7 { width: 357px; }
.body { display: flex; height: 69px; }
.gl { text-align: center; color: #6d809c; line-height: 18px; padding-right: 3px; }
.g1 .gl { padding-right: 2px; }
.big { display: flex; flex-direction: column; align-items: center; padding-top: 3px; width: 44px; }
.big span { line-height: 16px; margin-top: 2px; }
.big .dn { margin-top: 3px; }
.dn, .up { width: 6px; height: 3px; background: #3d5573; clip-path: polygon(0 0, 100% 0, 50% 100%); }
.up { background: #a8b5c8; clip-path: polygon(0 100%, 100% 100%, 50% 0); }
.dis { color: #8792a2; }
.dis .dn { background: #9aa7ba; }
.paste { margin-left: 4.5px; }
.select { margin-left: 2.5px; }
.brushes { margin-left: 5px; }
.brushes span { letter-spacing: -.1px; }
.size { margin-left: 3px; }
.size span { margin-left: -1px; }
.r { height: 22px; display: flex; align-items: center; line-height: 22px; }
.r svg { margin-right: 4px; }
.r .dn { margin-left: 3px; }
.g1 .rows { margin-left: 3px; }
.g2 .rows { margin-left: 4.5px; }
.g2 .r span { letter-spacing: -.15px; }
.toolsbody { flex-direction: column; padding: 8px 0 0 4px; gap: 7px; }
.trow { display: flex; width: 69px; height: 22px; border: 1px solid #b5c4dc; border-radius: 2px; background: #f8fbff; }
.trow div { flex: 1; display: flex; align-items: center; justify-content: center; border-right: 1px solid #d6deec; }
.trow div:last-child { border-right: 0; }
.trow .on { background: #fbc75a; box-shadow: 0 0 0 1px #d9a33a; font: bold 19px "Liberation Serif", serif; color: #1e395b; padding: 1px 0 0 1px; }
.gallery { margin: 3px 0 0 5px; width: 157px; height: 60px; border: 1px solid #a6b9d9; background: #fff; display: flex; }
.gscroll { width: 14px; margin-left: -1px; border-left: 1px solid #c7d3e6; background: #edf5fd; display: flex; flex-direction: column; align-items: center; padding-top: 9px; }
.gscroll .up { margin-bottom: 17px; }
.bar { width: 7px; height: 1px; background: #3d5573; margin: 14px 0 2px; }
.g5 .rows { margin-left: 6px; }
.g5 .r svg { margin-right: 3px; }
.cbtn { width: 42px; height: 66px; display: flex; flex-direction: column; align-items: center; text-align: center; line-height: 13px; position: relative; }
.cbtn span { margin-top: auto; padding-bottom: 1px; }
.second span { padding-right: 1px; }
.cbtn.sel { margin-left: 4px; background: linear-gradient(#fbd79c 0 25px, #fdc453 26px 55px, #fdbd63 55px 59px, #ffd96c 59px); border: 1px solid #cd9a35; border-radius: 2px; padding-top: 2px; padding-right: 1px; }
.cbtn.sel span { padding-bottom: 1px; padding-right: 1px; }
.sw1 { width: 32px; height: 32px; background: #000; border: 1px solid #888; box-shadow: inset 0 0 0 1px #fbd79c; }
.sw2 { width: 24px; height: 24px; margin-top: 7px; background: #fff; border: 1px solid #888; }
.pal { display: grid; grid-template-columns: repeat(10, 20px); grid-auto-rows: 20px; gap: 2px; margin: 1px 0 0 1px; }
.pal i { border: 1px solid #a7a9ac; box-shadow: inset 0 0 0 1px #fff; }
.pal .e { box-shadow: none; }
.k0 { background: #000; } .k1 { background: #777; } .k2 { background: #880015; } .k3 { background: #ee1122; } .k4 { background: #ff7722; } .k5 { background: #ffff00; } .k6 { background: #22bb44; } .k7 { background: #00aaee; } .k8 { background: #3344cc; } .k9 { background: #aa44aa; }
.m0 { background: #fff; } .m1 { background: #ccc; } .m2 { background: #b97755; } .m3 { background: #ffaacc; } .m4 { background: #ffcc00; } .m5 { background: #eeeebb; } .m6 { background: #bbee11; } .m7 { background: #99ddee; } .m8 { background: #7799bb; } .m9 { background: #ccbbee; }
.edit { padding-top: 4px; margin-left: 1px; }

.work { height: 564px; display: flex; position: relative; }
.leftstrip { width: 5px; background: linear-gradient(#ccccdd 0 25px, #ccddee 25px 259px, #ddddee 259px 417px, #ddeeee 417px 480px, #ddeeff 480px); }
.canvas { width: 1244px; height: 559px; margin-top: 5px; background: #fff; position: relative; color: #000; box-shadow: 0 -5px 0 #ccccdd; }
.t { position: absolute; font: bold 29px/36px "Liberation Sans", Arial, sans-serif; }
.q { letter-spacing: -.4px; }
.box { position: absolute; border: 5px solid #000; }
.sidetab { position: absolute; right: 0; top: 487px; }

.status { height: 27px; background: #ffeeee; border-top: 1px solid #8f8f8f; border-bottom: 2px solid #3d4b60; display: flex; align-items: center; color: #111; }
.status > div { height: 23px; display: flex; align-items: center; border-right: 1px solid #dcdcdc; }
.s1 { width: 156px; padding-left: 4px; gap: 6px; } .s2 { width: 156px; padding-left: 5px; } .s3 { width: 156px; padding-left: 5px; gap: 4px; } .s4 { width: 156px; } .s5 { width: 544px; }
.status span { letter-spacing: -.4px; }
.status .dims { letter-spacing: -.2px; }
.status .zoombar { margin-left: 9px; width: 189px; background: #fff; border: 0; padding-left: 11px; }
.zoombar span { width: 29px; }
.zoombar svg { margin-left: 4px; }

.taskbar { height: 38px; display: flex; background: linear-gradient(90deg, #8899aa 0 50px, #9db2c4 70px, #aabbdd 95px, #aaccdd 120px 1143px, #aabbdd 1143px 1152px, #99bbcc 1152px 1159px, #99aacc 1159px 1166px, #88aabb 1166px 1171px, #8899bb 1171px 1176px, #8899aa 1176px); }
.ti { width: 59px; margin-right: 3px; display: flex; align-items: center; justify-content: center; }
.ti.orb { width: 54px; margin-right: 5px; }
.run { border: 1px solid #5d6c86; border-radius: 2px; background: linear-gradient(135deg, #f3f3fb, #d7ddec 40%, #bbc9e4 60%, #c8dcea); box-shadow: inset 0 0 0 1px #e9eef6; }
.run.front { background: linear-gradient(135deg, #fff, #ebeff8 50%, #cfdcea); }
.tray { margin-left: auto; display: flex; align-items: center; color: #fff; }
.tclock { width: 79px; padding-left: 7px; text-align: center; line-height: 17px; font-size: 11.5px; }
.peek { width: 15px; height: 38px; border: 1px solid #a9b9c9; border-left-color: #5b6b7c; background: linear-gradient(#8797a8, #556678 40%, #667799 70%, #99aabb); }

.download { position: absolute; left: 1363px; top: 923px; width: 230px; height: 30px; background: #3c3c3c; box-shadow: 0 0 10px rgba(0,0,0,.35); color: #fff; display: flex; align-items: center; font: 17.5px/28px "Noto Sans", sans-serif; padding: 0 9px 0 20px; justify-content: space-between; }
.download span { letter-spacing: .95px; height: 30px; }
```
